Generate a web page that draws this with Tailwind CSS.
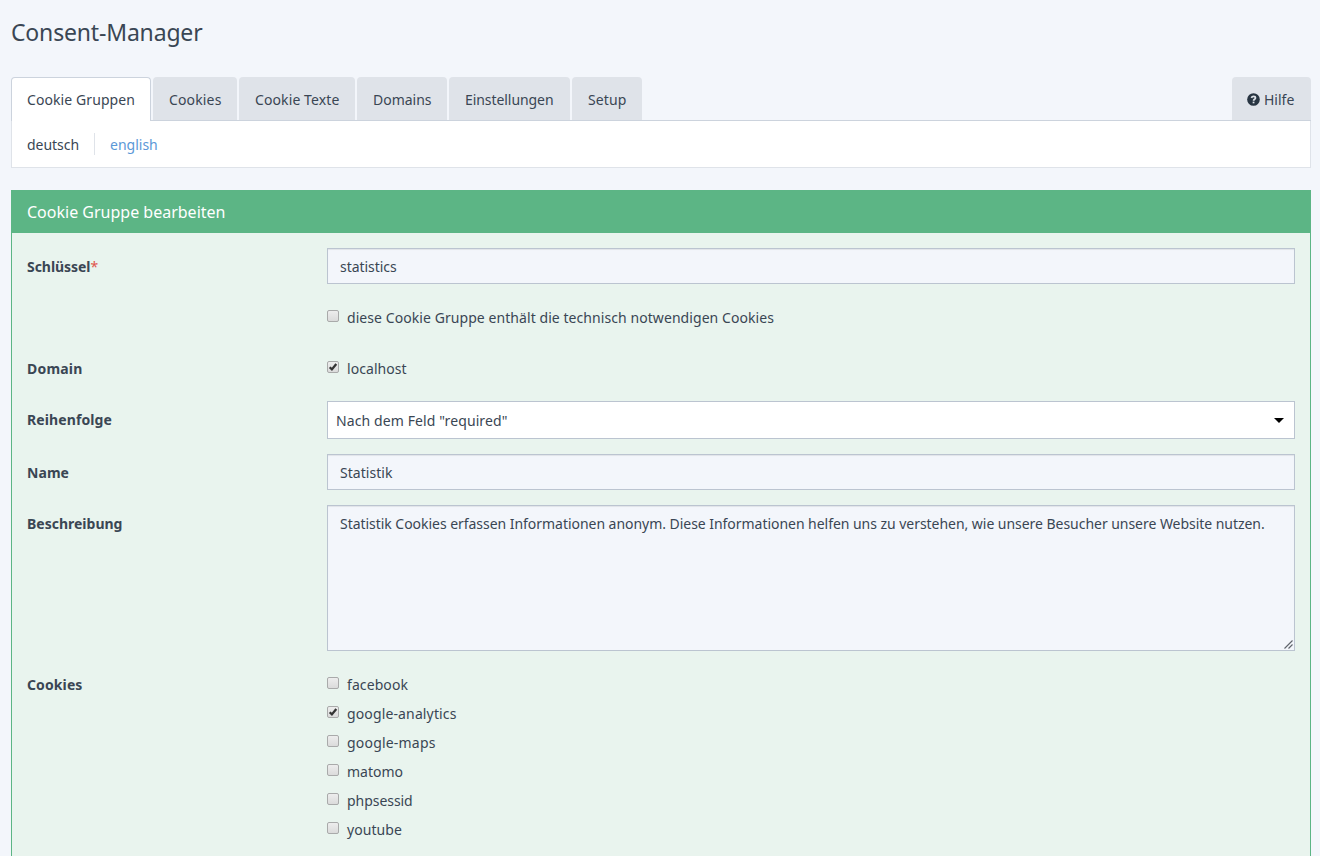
<!DOCTYPE html>
<html lang="de">
<head>
<meta charset="utf-8">
<title>Consent-Manager</title>
<script src="https://cdn.jsdelivr.net/npm/@tailwindcss/browser@4"></script>
</head>
<body class="bg-[#f3f6fb] h-[856px] overflow-hidden font-['Noto_Sans','Open_Sans',sans-serif] text-[14px] leading-5 text-[#3a4654]">
<svg class="absolute h-0 w-0">
  <defs>
    <linearGradient id="box" x1="0" y1="0" x2="0" y2="1"><stop offset="0" stop-color="#eeeeee"/><stop offset="1" stop-color="#dadada"/></linearGradient>
    <symbol id="off" viewBox="0 0 13 13"><rect x=".5" y=".5" width="11" height="11" rx="1.5" fill="url(#box)" stroke="#a9aaaa"/></symbol>
    <symbol id="on" viewBox="0 0 13 13"><rect x=".5" y=".5" width="11" height="11" rx="1.5" fill="url(#box)" stroke="#a9aaaa"/><path d="M2.700 6.200 4.900 8.400 9.300 3" fill="none" stroke="#343434" stroke-width="2.300"/></symbol>
  </defs>
</svg>
<div class="pl-[11px] pr-[9px]">
  <header class="h-[77px] pt-[16px]">
    <h1 class="text-[23px] leading-8 tracking-[-0.172px]">Consent-Manager</h1>
  </header>

  <nav class="flex h-[44px] gap-[2px] border-b border-[#ccd3dd] whitespace-nowrap">
    <a class="h-[44px] w-[140px] shrink-0 rounded-t-[4px] border border-b-0 border-[#ccd3dd] bg-white pt-[12px] pl-[15px] tracking-[0.085px]">Cookie Gruppen</a>
    <a class="w-[84px] rounded-t-[4px] bg-[#dfe3e9] pt-[13px] pl-4 tracking-[0.146px]">Cookies</a>
    <a class="w-[116px] rounded-t-[4px] bg-[#dfe3e9] pt-[13px] pl-4 tracking-[0.1px]">Cookie Texte</a>
    <a class="w-[90px] rounded-t-[4px] bg-[#dfe3e9] pt-[13px] pl-4 tracking-[-0.015px]">Domains</a>
    <a class="w-[121px] rounded-t-[4px] bg-[#dfe3e9] pt-[13px] pl-4 tracking-[-0.068px]">Einstellungen</a>
    <a class="w-[70px] rounded-t-[4px] bg-[#dfe3e9] pt-[13px] pl-4 tracking-[0.12px]">Setup</a>
    <a class="ml-auto flex w-[79px] gap-1 rounded-t-[4px] bg-[#dfe3e9] pt-[13px] pl-[15px]">
      <svg class="mt-[3px] h-[13px] w-[13px]" viewBox="0 0 14 14"><circle cx="7" cy="7" r="6.8" fill="#283542"/><path d="M4.700 5.300C5.200 4.200 6 3.700 7 3.700c1.200 0 2.100.7 2.100 1.700C9.100 6.800 7.100 6.800 7.100 8.300" fill="none" stroke="#dfe3e9" stroke-width="1.900"/><path d="M6.100 9.300h1.900v1.800H6.100z" fill="#dfe3e9"/></svg>
      <span>Hilfe</span>
    </a>
  </nav>
  <div class="flex h-[47px] border border-t-0 border-[#dfe3e9] bg-white pt-[12px] pl-[15px]">
    <a class="h-[22px] w-[68px] border-r border-[#dfe3e9] pt-[2px] tracking-[-0.041px]">deutsch</a>
    <a class="pt-[2px] pl-[15px] text-[#5b98d7]">english</a>
  </div>

  <section class="mt-[22px] h-[666px] overflow-hidden border border-b-0 border-[#5cb585] bg-[#e9f4ee]">
    <h2 class="h-[42px] bg-[#5cb585] pt-[11px] pl-[15px] text-[16px] leading-5 text-white">Cookie Gruppe bearbeiten</h2>
    <div class="grid grid-cols-[300px_1fr] pt-[15px] pr-[15px] pl-[15px]">
      <div class="pt-[9px] font-bold tracking-[-0.044px]">Schlüssel<span class="font-normal text-[#e0544c]">*</span></div>
      <div class="h-[36px] border border-[#bbc4d0] bg-[#f3f6fb] pt-[8px] pl-[12px] tracking-[-0.05px] shadow-[inset_0_1px_1px_rgba(0,0,0,0.075)]">statistics</div>

      <div class="col-start-2 mt-[24px] flex h-[20px] gap-[7px] tracking-[0.068px]"><svg class="mt-[2px] h-[13px] w-[13px]"><use href="#off"/></svg><span>diese Cookie Gruppe enthält die technisch notwendigen Cookies</span></div>

      <div class="mt-[31px] h-[20px] font-bold tracking-[0.197px]">Domain</div>
      <div class="mt-[31px] flex h-[20px] gap-[7px] tracking-[0.06px]"><svg class="mt-[2px] h-[13px] w-[13px]"><use href="#on"/></svg><span>localhost</span></div>

      <div class="mt-[22px] pt-[9px] font-bold tracking-[0.106px]">Reihenfolge</div>
      <div class="mt-[22px] flex h-[38px] items-start justify-between border border-[#bbc4d0] bg-white pt-[9px] pr-[10px] pl-[8px] tracking-[0.102px]"><span>Nach dem Feld "required"</span><svg class="mt-[7px] h-[5px] w-[10px]" viewBox="0 0 10 5"><path d="M0 0h10L5 5z" fill="#000"/></svg></div>

      <div class="mt-[15px] pt-[9px] font-bold tracking-[0.056px]">Name</div>
      <div class="mt-[15px] h-[36px] border border-[#bbc4d0] bg-[#f3f6fb] pt-[8px] pl-[12px] tracking-[0.04px] shadow-[inset_0_1px_1px_rgba(0,0,0,0.075)]">Statistik</div>

      <div class="mt-[15px] pt-[9px] font-bold">Beschreibung</div>
      <div class="mt-[15px] flex h-[146px] items-start border border-[#bbc4d0] bg-[#f3f6fb] pt-[8px] pl-[12px] tracking-[-0.039px] whitespace-nowrap shadow-[inset_0_1px_1px_rgba(0,0,0,0.075)]"><span>Statistik Cookies erfassen Informationen anonym. Diese Informationen helfen uns zu verstehen, wie unsere Besucher unsere Website nutzen.</span><svg class="mr-px mb-px ml-auto h-[9px] w-[9px] self-end" viewBox="0 0 9 9"><path d="M.5 8.500l8-8M4.500 8.500l4-4" fill="none" stroke="#5f646b" stroke-width="1.100"/></svg></div>

      <div class="mt-[24px] font-bold tracking-[0.109px]">Cookies</div>
      <div class="mt-[24px] flex flex-col gap-[9px]">
        <div class="flex h-[20px] gap-[7px] tracking-[0.086px]"><svg class="mt-[2px] h-[13px] w-[13px]"><use href="#off"/></svg><span>facebook</span></div>
        <div class="flex h-[20px] gap-[7px] tracking-[0.133px]"><svg class="mt-[2px] h-[13px] w-[13px]"><use href="#on"/></svg><span>google-analytics</span></div>
        <div class="flex h-[20px] gap-[7px] tracking-[0.2px]"><svg class="mt-[2px] h-[13px] w-[13px]"><use href="#off"/></svg><span>google-maps</span></div>
        <div class="flex h-[20px] gap-[7px]"><svg class="mt-[2px] h-[13px] w-[13px]"><use href="#off"/></svg><span>matomo</span></div>
        <div class="flex h-[20px] gap-[7px] tracking-[-0.05px]"><svg class="mt-[2px] h-[13px] w-[13px]"><use href="#off"/></svg><span>phpsessid</span></div>
        <div class="flex h-[20px] gap-[7px] tracking-[0.075px]"><svg class="mt-[2px] h-[13px] w-[13px]"><use href="#off"/></svg><span>youtube</span></div>
      </div>
    </div>
  </section>
</div>
</body>
</html>
